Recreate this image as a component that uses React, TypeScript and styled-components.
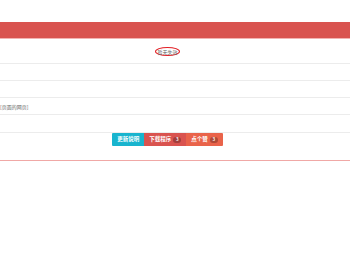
import React from 'react'
import styled, { createGlobalStyle } from 'styled-components'

const GlobalStyle = createGlobalStyle`
  html, body {
    margin: 0;
    padding: 0;
    background: #ffffff;
  }
  body {
    font-family: "Noto Sans CJK SC", "Liberation Sans", sans-serif;
    color: #555;
  }
`

export default function App() {
  return (
    <>
      <GlobalStyle />
      <Page>
        <HeaderBar />
        <StatusRow>
          <Marked>暂无失效</Marked>
        </StatusRow>
        <Row $height={16} />
        <Row $height={16} />
        <Row $height={16}>
          <Note>[页面的网页]</Note>
        </Row>
        <Row $height={17} />
        <ActionRow>
          <ButtonGroup>
            <ActionButton $color="#18b4ce">更新说明</ActionButton>
            <ActionButton $color="#d9534f">
              下载程序 <Badge>3</Badge>
            </ActionButton>
            <ActionButton $color="#e9634a">
              点个赞 <Badge>3</Badge>
            </ActionButton>
          </ButtonGroup>
        </ActionRow>
      </Page>
    </>
  )
}

const Page = styled.div`
  display: flex;
  flex-direction: column;
  width: 350px;
  height: 280px;
  padding-top: 22px;
  box-sizing: border-box;
  overflow: hidden;
`

const HeaderBar = styled.div`
  height: 16px;
  background: #d9534f;
  border-bottom: 1px solid #f3b3b1;
`

const Row = styled.div<{ $height: number }>`
  display: flex;
  align-items: center;
  height: ${(p) => p.$height}px;
  border-bottom: 1px solid #ececec;
`

const StatusRow = styled.div`
  display: flex;
  align-items: center;
  height: 25px;
  padding-left: 155px;
  padding-top: 1px;
  box-sizing: border-box;
  border-bottom: 1px solid #ececec;
`

const Marked = styled.span`
  display: inline-flex;
  align-items: center;
  justify-content: center;
  width: 25px;
  height: 9px;
  border: 1.5px solid #e31e24;
  border-radius: 50%;
  font-size: 5px;
  line-height: 1;
  color: #666;
  box-sizing: border-box;
`

const Note = styled.span`
  font-size: 5px;
  line-height: 1;
  color: #666;
  white-space: nowrap;
`

const ActionRow = styled.div`
  display: flex;
  justify-content: center;
  align-items: flex-start;
  height: 28px;
  padding-right: 15px;
  border-bottom: 1px solid #f0a8a6;
  box-sizing: border-box;
`

const ButtonGroup = styled.div`
  display: flex;
  height: 13px;
  border-radius: 1px;
  overflow: hidden;
`

const ActionButton = styled.span<{ $color: string }>`
  display: flex;
  align-items: center;
  gap: 2px;
  padding: 0 5px;
  background: ${(p) => p.$color};
  color: #ffffff;
  font-size: 5.5px;
  font-weight: 600;
  line-height: 1;
  white-space: nowrap;
`

const Badge = styled.span`
  display: inline-flex;
  align-items: center;
  justify-content: center;
  min-width: 6px;
  height: 6px;
  padding: 0 1px;
  border-radius: 3px;
  background: rgba(0, 0, 0, 0.25);
  font-size: 4.5px;
`
